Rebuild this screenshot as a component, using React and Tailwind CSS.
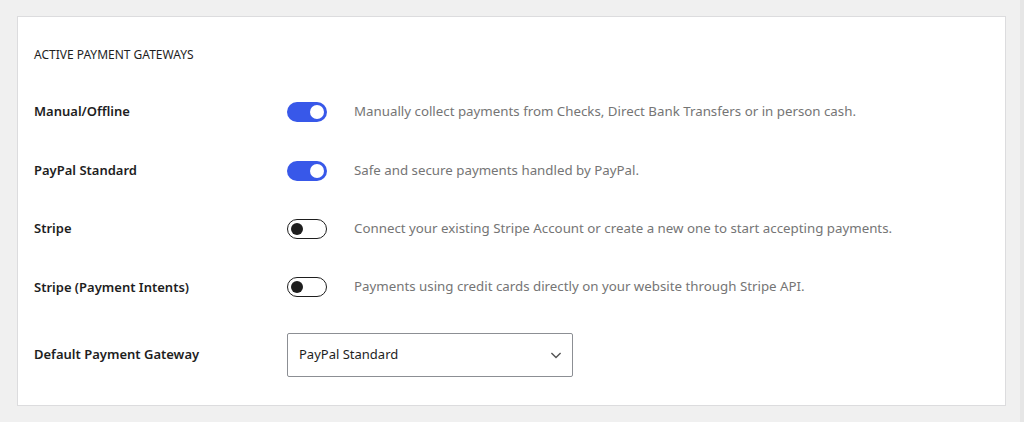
import React from "react";

const rows = [
  { label: "Manual/Offline", on: true, desc: "Manually collect payments from Checks, Direct Bank Transfers or in person cash." },
  { label: "PayPal Standard", on: true, desc: "Safe and secure payments handled by PayPal." },
  { label: "Stripe", on: false, desc: "Connect your existing Stripe Account or create a new one to start accepting payments." },
  { label: "Stripe (Payment Intents)", on: false, desc: "Payments using credit cards directly on your website through Stripe API." },
];

function Toggle({ on }) {
  return on ? (
    <div className="w-[40px] h-[20px] rounded-full bg-[#3858e9] flex items-center justify-end pr-[3px]">
      <div className="w-[14px] h-[14px] rounded-full bg-white" />
    </div>
  ) : (
    <div className="w-[40px] h-[20px] rounded-full border border-[#1e1e1e] bg-white flex items-center pl-[3px]">
      <div className="w-[12px] h-[12px] rounded-full bg-[#1e1e1e]" />
    </div>
  );
}

export default function App() {
  return (
    <div className="w-[1024px] h-[422px] bg-[#f0f0f0] pt-[16px] pl-[17px] relative overflow-hidden" style={{ fontFamily: '"Noto Sans", "Open Sans", sans-serif' }}>
      <div className="w-[989px] h-[390px] bg-white border border-[#dcdcde] px-[16px]">
        <div className="h-[66px] pt-[29px] text-[12px] leading-[18px] text-[#1e1e1e] uppercase">Active Payment Gateways</div>
        {rows.map((r) => (
          <div key={r.label} className="h-[58.4px] flex items-center">
            <div className="w-[253px] text-[13px] font-semibold text-[#1e1e1e]">{r.label}</div>
            <Toggle on={r.on} />
            <div className="ml-[27px] text-[13.3px] text-[#757575]">{r.desc}</div>
          </div>
        ))}
        <div className="h-[44px] mt-[16px] flex items-center">
          <div className="w-[253px] text-[13px] font-semibold text-[#1e1e1e]">Default Payment Gateway</div>
          <div className="w-[286px] h-[44px] border border-[#8c8f94] rounded-[2px] flex items-center justify-between pl-[11px] pr-[6px] text-[13px] text-[#1e1e1e]">
            <span>PayPal Standard</span>
            <svg width="20" height="20" viewBox="0 0 24 24" fill="none" stroke="#555" strokeWidth="1.7"><path d="M6.5 9.5l5.5 5.5 5.5-5.5" /></svg>
          </div>
        </div>
      </div>
      <div className="absolute right-0 top-0 w-[4px] h-full bg-[#e6e6e6]" />
    </div>
  );
}
